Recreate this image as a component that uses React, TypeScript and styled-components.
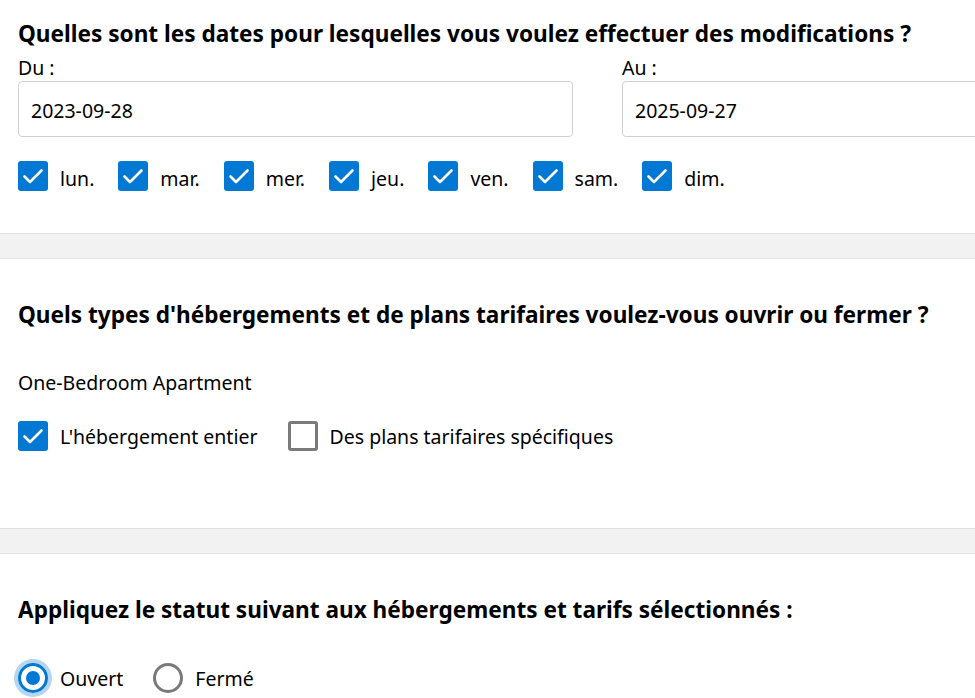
import React from "react";
import styled, { createGlobalStyle } from "styled-components";

const Global = createGlobalStyle`
  html, body { margin: 0; padding: 0; overflow: hidden; background: #fff; }
  body { font-family: "Noto Sans", "Open Sans", sans-serif; color: #000; }
`;

const Page = styled.div`
  width: 1200px;
`;

const Section = styled.section<{ $pt: number; $pb: number }>`
  padding: ${(p) => p.$pt}px 18px ${(p) => p.$pb}px;
`;

const Heading = styled.h2<{ $mb: number }>`
  margin: 0 0 ${(p) => p.$mb}px;
  font-size: 22.6px;
  line-height: 28px;
  font-weight: 700;
`;

const Band = styled.div`
  height: 24px;
  background: #f2f2f2;
  border-top: 1px solid #e1e1e1;
  border-bottom: 1px solid #e1e1e1;
`;

const DateGrid = styled.div`
  display: grid;
  grid-template-columns: 555px 555px;
  column-gap: 49px;
  margin-top: 8px;
`;

const Field = styled.div`
  display: flex;
  flex-direction: column;
`;

const FieldLabel = styled.label`
  font-size: 19.5px;
  line-height: 24px;
  margin-bottom: 1px;
`;

const DateInput = styled.div`
  box-sizing: border-box;
  height: 56px;
  border: 1px solid #d1d1d1;
  border-radius: 4px;
  padding: 2px 12px 0;
  display: flex;
  align-items: center;
  font-size: 19.5px;
`;

const OptionRow = styled.div<{ $mt: number; $gap: number }>`
  display: flex;
  align-items: center;
  gap: ${(p) => p.$gap}px;
  margin-top: ${(p) => p.$mt}px;
  height: 30px;
`;

const Option = styled.label`
  display: flex;
  align-items: center;
  gap: 12px;
  font-size: 19.5px;
  line-height: 24px;
  white-space: nowrap;
`;

const OptionText = styled.span<{ $shift: number }>`
  padding-top: ${(p) => p.$shift}px;
`;

const Box = styled.span<{ $checked: boolean }>`
  box-sizing: border-box;
  width: 30px;
  height: 30px;
  border-radius: 3px;
  display: flex;
  align-items: center;
  justify-content: center;
  background: ${(p) => (p.$checked ? "#0078d4" : "#fff")};
  border: ${(p) => (p.$checked ? "none" : "3px solid #7a7a7a")};
  flex: none;
`;

const Radio = styled.span<{ $checked: boolean }>`
  box-sizing: border-box;
  width: 30px;
  height: 30px;
  border-radius: 50%;
  border: 3px solid ${(p) => (p.$checked ? "#0078d4" : "#7a7a7a")};
  display: flex;
  align-items: center;
  justify-content: center;
  flex: none;
  box-shadow: ${(p) => (p.$checked ? "0 0 0 4px #b4d6f1" : "none")};
  &::after {
    content: "";
    width: 14px;
    height: 14px;
    border-radius: 50%;
    background: ${(p) => (p.$checked ? "#0078d4" : "transparent")};
  }
`;

const PlainText = styled.div<{ $mb: number }>`
  font-size: 19.5px;
  line-height: 24px;
  margin-bottom: ${(p) => p.$mb}px;
`;

const Check = () => (
  <svg width="30" height="30" viewBox="0 0 30 30">
    <path d="M6.5 15.5 L12 21 L23.5 9.5" fill="none" stroke="#fff" strokeWidth="2.6" strokeLinecap="round" strokeLinejoin="round" />
  </svg>
);

const CheckOption = ({ checked, label, shift = 1 }: { checked: boolean; label: string; shift?: number }) => (
  <Option>
    <Box $checked={checked}>{checked && <Check />}</Box>
    <OptionText $shift={shift}>{label}</OptionText>
  </Option>
);

const days = ["lun.", "mar.", "mer.", "jeu.", "ven.", "sam.", "dim."];

export default function App() {
  return (
    <Page>
      <Global />
      <Section $pt={20} $pb={42}>
        <Heading $mb={0}>Quelles sont les dates pour lesquelles vous voulez effectuer des modifications ?</Heading>
        <DateGrid>
          <Field>
            <FieldLabel>Du :</FieldLabel>
            <DateInput>2023-09-28</DateInput>
          </Field>
          <Field>
            <FieldLabel>Au :</FieldLabel>
            <DateInput>2025-09-27</DateInput>
          </Field>
        </DateGrid>
        <OptionRow $mt={24} $gap={24}>
          {days.map((d) => (
            <CheckOption key={d} checked label={d} shift={5} />
          ))}
        </OptionRow>
      </Section>
      <Band />
      <Section $pt={42} $pb={77}>
        <Heading $mb={42}>Quels types d'hébergements et de plans tarifaires voulez-vous ouvrir ou fermer ?</Heading>
        <PlainText $mb={26}>One-Bedroom Apartment</PlainText>
        <OptionRow $mt={0} $gap={30}>
          <CheckOption checked label="L'hébergement entier" />
          <CheckOption checked={false} label="Des plans tarifaires spécifiques" />
        </OptionRow>
      </Section>
      <Band />
      <Section $pt={42} $pb={20}>
        <Heading $mb={39}>Appliquez le statut suivant aux hébergements et tarifs sélectionnés :</Heading>
        <OptionRow $mt={0} $gap={30}>
          <Option>
            <Radio $checked />
            <OptionText $shift={1}>Ouvert</OptionText>
          </Option>
          <Option>
            <Radio $checked={false} />
            <OptionText $shift={1}>Fermé</OptionText>
          </Option>
        </OptionRow>
      </Section>
    </Page>
  );
}
